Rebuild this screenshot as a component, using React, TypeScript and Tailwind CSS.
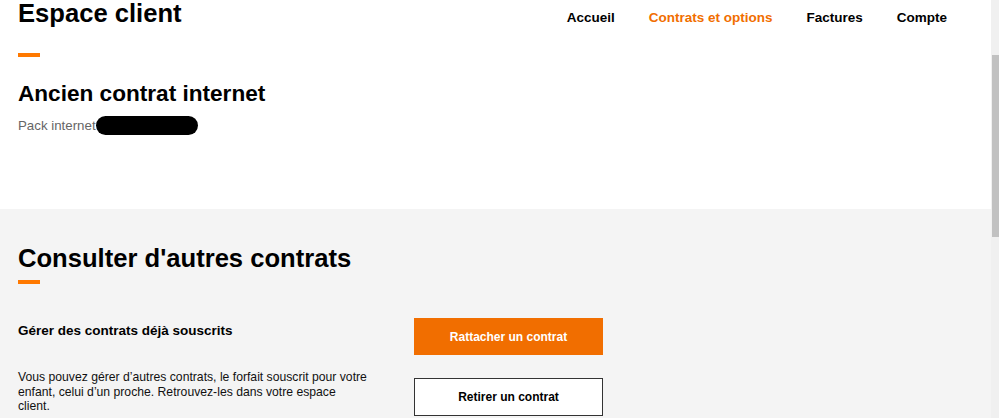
const navItems = [
  { label: 'Accueil', active: false },
  { label: 'Contrats et options', active: true },
  { label: 'Factures', active: false },
  { label: 'Compte', active: false },
];

function OrangeBar({ className = '' }: { className?: string }) {
  return <div className={`w-[22px] h-[4px] bg-[#ff7900] ${className}`} />;
}

export default function App() {
  return (
    <div className="flex h-[418px] w-[999px] overflow-hidden bg-white font-['Liberation_Sans',Arial,sans-serif] text-black">
      {/* Page */}
      <div className="flex-1 min-w-0 flex flex-col">
        {/* Current contract */}
        <section className="h-[209px] shrink-0 bg-white pl-[18px] pr-[44px]">
          <div className="flex items-start justify-between">
            <h1 className="text-[25.6px] leading-[26px] font-bold">Espace client</h1>
            <nav className="flex gap-[34px] mt-[8px]">
              {navItems.map((item) => (
                <a
                  key={item.label}
                  href="#"
                  className={`text-[13.5px] leading-[20px] font-bold ${
                    item.active ? 'text-[#f16e00]' : 'text-black'
                  }`}
                >
                  {item.label}
                </a>
              ))}
            </nav>
          </div>
          <OrangeBar className="mt-[25px]" />

          <h2 className="mt-[24px] text-[22.6px] leading-[26px] font-bold">
            Ancien contrat internet
          </h2>
          <p className="mt-[9px] text-[13.3px] leading-[20px] text-[#666]">
            Pack internet
            <span className="inline-block align-middle -mt-[2px] w-[102px] h-[19px] rounded-full bg-black" />
          </p>
        </section>

        {/* Other contracts */}
        <section className="flex-1 bg-[#f4f4f4] pl-[18px] pt-[36px]">
          <h2 className="text-[25.6px] leading-[26px] font-bold">
            Consulter d'autres contrats
          </h2>
          <OrangeBar className="mt-[9px]" />

          <div className="flex items-start mt-[34px]">
            <div className="w-[396px] shrink-0">
              <h3 className="pt-[3px] text-[13.5px] leading-[20px] font-bold">
                Gérer des contrats déjà souscrits
              </h3>
              <p className="mt-[29px] w-[350px] text-[12.2px] leading-[14.7px] text-[#111]">
                Vous pouvez gérer d’autres contrats, le forfait souscrit pour votre
                enfant, celui d’un proche. Retrouvez-les dans votre espace client.
              </p>
            </div>
            <div className="w-[189px] flex flex-col gap-[23px]">
              <button className="h-[37px] bg-[#f16e00] text-white text-[12px] font-bold">
                Rattacher un contrat
              </button>
              <button className="h-[38px] bg-white border border-[#333] text-black text-[12px] font-bold">
                Retirer un contrat
              </button>
            </div>
          </div>
        </section>
      </div>

      {/* Scrollbar */}
      <div className="w-[8px] shrink-0 bg-[#f0f0f0] flex justify-end">
        <div className="mt-[55px] w-[7px] h-[182px] bg-[#c1c1c1]" />
      </div>
    </div>
  );
}
